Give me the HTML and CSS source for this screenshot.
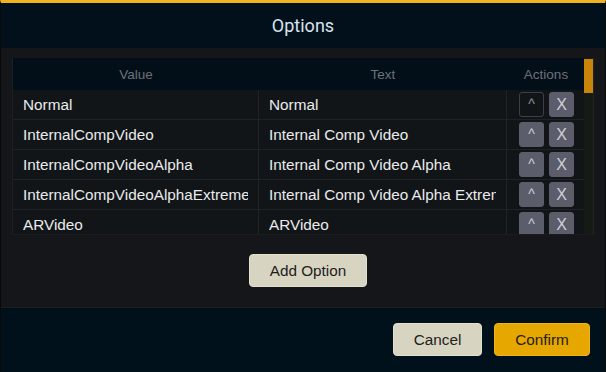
FILE: index.html
```html
<!DOCTYPE html>
<html>
<head>
<meta charset="utf-8">
<link rel="stylesheet" href="styles.css">
</head>
<body>
<div class="dialog">
  <div class="dialog-header">Options</div>
  <div class="dialog-body">
    <div class="table-wrap">
      <div class="table">
        <div class="row head">
          <div class="cell">Value</div>
          <div class="cell">Text</div>
          <div class="cell">Actions</div>
        </div>
        <div class="row">
          <div class="cell"><span class="txt">Normal</span></div>
          <div class="cell"><span class="txt">Normal</span></div>
          <div class="cell actions"><button class="mini up disabled">^</button><button class="mini">X</button></div>
        </div>
        <div class="row">
          <div class="cell"><span class="txt">InternalCompVideo</span></div>
          <div class="cell"><span class="txt">Internal Comp Video</span></div>
          <div class="cell actions"><button class="mini up">^</button><button class="mini">X</button></div>
        </div>
        <div class="row">
          <div class="cell"><span class="txt">InternalCompVideoAlpha</span></div>
          <div class="cell"><span class="txt">Internal Comp Video Alpha</span></div>
          <div class="cell actions"><button class="mini up">^</button><button class="mini">X</button></div>
        </div>
        <div class="row">
          <div class="cell"><span class="txt">InternalCompVideoAlphaExtreme</span></div>
          <div class="cell"><span class="txt">Internal Comp Video Alpha Extreme</span></div>
          <div class="cell actions"><button class="mini up">^</button><button class="mini">X</button></div>
        </div>
        <div class="row">
          <div class="cell"><span class="txt">ARVideo</span></div>
          <div class="cell"><span class="txt">ARVideo</span></div>
          <div class="cell actions"><button class="mini up">^</button><button class="mini">X</button></div>
        </div>
      </div>
      <div class="scrollbar"><div class="thumb"></div></div>
    </div>
    <button class="btn btn-light add">Add Option</button>
  </div>
  <div class="dialog-footer">
    <button class="btn btn-light cancel">Cancel</button>
    <button class="btn btn-primary confirm">Confirm</button>
  </div>
</div>
</body>
</html>
```
FILE: styles.css
```css
* { box-sizing: border-box; }
html, body { margin: 0; padding: 0; background: #01101a; }
body { width: 606px; height: 372px; overflow: hidden; font-family: "Liberation Sans", Arial, sans-serif; }

.dialog {
  width: 606px;
  height: 372px;
  display: flex;
  flex-direction: column;
  border-top: 3px solid #efb41d;
  border-left: 1px solid #07090b;
  border-right: 1px solid #07090b;
  background: #01101a;
}

.dialog-header {
  height: 45px;
  display: flex;
  align-items: center;
  justify-content: center;
  font-family: Roboto, "Liberation Sans", sans-serif;
  font-size: 18px;
  color: #d9e4ee;
  background: #01101a;
  padding-bottom: 1px;
}

.dialog-body {
  height: 260px;
  background: #141619;
  padding: 10px 11px 20px 11px;
  display: flex;
  flex-direction: column;
  align-items: center;
  border-bottom: 1px solid #201f19;
}

.table-wrap {
  width: 100%;
  height: 178px;
  display: flex;
  overflow: hidden;
  border-bottom: 1px solid #1a1d20;
}

.table {
  width: 572px;
  background: #121518;
  border-left: 1px solid #1b1e22;
}

.row {
  display: grid;
  grid-template-columns: 246px 248px 78px;
  height: 30px;
  border-bottom: 1px solid #1f2226;
}

.row.head {
  height: 32px;
  background: #030f18;
  border-bottom: none;
}

.cell {
  display: flex;
  align-items: center;
  padding: 0 10px;
  font-size: 15.3px;
  color: #e9ebed;
  white-space: nowrap;
  min-width: 0;
  border-right: 1px solid #1f2226;
}
.cell:last-child { border-right: none; }

.txt {
  display: block;
  overflow: hidden;
  min-width: 0;
  flex: 1;
}

.head .cell {
  justify-content: center;
  font-size: 13.5px;
  color: #6c7178;
  border-right: none;
}

.cell.actions {
  padding: 0 0 0 12px;
  gap: 5px;
}

.mini {
  width: 25px;
  height: 25px;
  padding: 0;
  border: 1px solid #5b5d6b;
  border-radius: 3px;
  background: #5b5d6b;
  color: #cdd0d8;
  font-family: "Liberation Sans", Arial, sans-serif;
  font-size: 16px;
  display: flex;
  align-items: center;
  justify-content: center;
}
.mini.up { font-size: 14px; padding-bottom: 2px; }
.mini.disabled {
  background: transparent;
  border-color: #3d4048;
  color: #8e9199;
}

.scrollbar {
  width: 10px;
  background: #161a15;
  border-right: 1px solid #22261f;
}
.thumb {
  height: 34px;
  margin-top: 1px;
  background: #c8850a;
}

.btn {
  height: 33px;
  border-radius: 4px;
  font-family: "Liberation Sans", Arial, sans-serif;
  font-size: 15.3px;
  color: #1f201b;
  padding: 0;
}
.btn-light {
  background: #d7d5c2;
  border: 1px solid #e2e0cf;
}
.btn-primary {
  background: #e6a700;
  border: 1px solid #efb41d;
}

.add {
  width: 118px;
  margin-top: 19px;
  margin-left: 10px;
}

.dialog-footer {
  flex: 1;
  display: flex;
  justify-content: flex-end;
  align-items: flex-start;
  gap: 12px;
  padding: 15px 15px 0 0;
  background: #01111b;
}
.cancel { width: 89px; }
.confirm { width: 96px; }
```
